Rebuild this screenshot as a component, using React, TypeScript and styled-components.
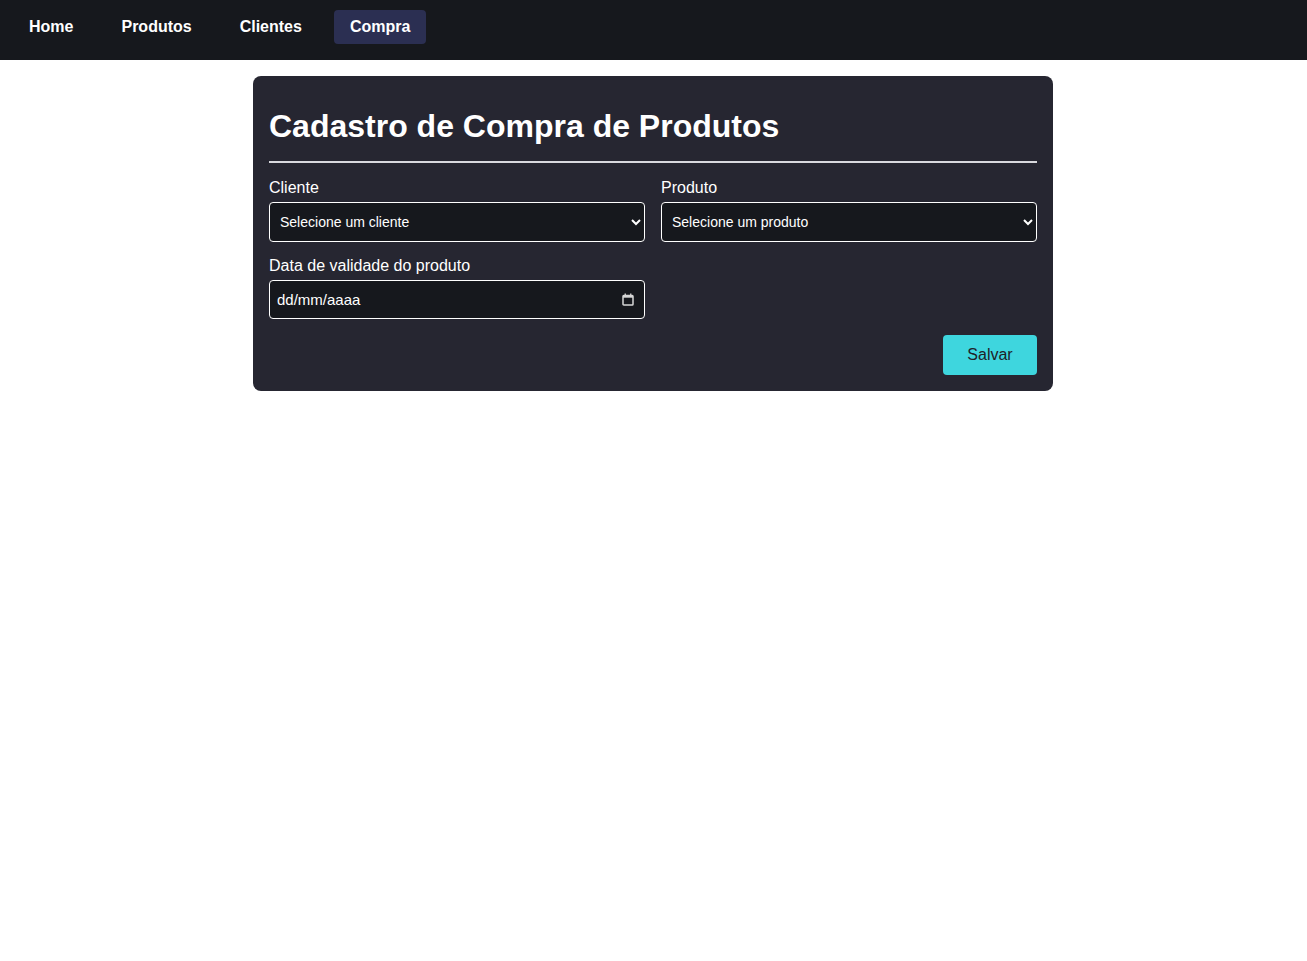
import React from "react";
import styled, { createGlobalStyle } from "styled-components";

const Global = createGlobalStyle`
  html, body { margin: 0; padding: 0; background: #ffffff; }
  body { font-family: "Liberation Sans", Arial, sans-serif; }
  * { box-sizing: border-box; }
`;

const NavBar = styled.nav`
  height: 60px;
  background: #16181d;
  display: flex;
  align-items: flex-start;
  gap: 16px;
  padding: 10px 13px 0;
`;

const NavLink = styled.a<{ $active?: boolean }>`
  display: block;
  padding: 0 16px;
  height: 34px;
  line-height: 34px;
  border-radius: 4px;
  font-size: 16px;
  font-weight: 700;
  color: #ffffff;
  text-decoration: none;
  background: ${(p) => (p.$active ? "#2b2f52" : "transparent")};
`;

const Main = styled.main`
  display: flex;
  justify-content: center;
  padding: 16px 1px 0 0;
`;

const Card = styled.section`
  width: 800px;
  background: #262631;
  border-radius: 8px;
  padding: 16px;
  color: #ffffff;
`;

const Title = styled.h1`
  margin: 16px 0 0;
  font-size: 32px;
  line-height: 37px;
  font-weight: 700;
`;

const Divider = styled.hr`
  margin: 16px 0 16px;
  border: none;
  border-top: 2px solid #d9d9de;
`;

const Grid = styled.div`
  display: grid;
  grid-template-columns: 1fr 1fr;
  column-gap: 16px;
  row-gap: 15px;
`;

const Field = styled.label`
  display: flex;
  flex-direction: column;
  gap: 5px;
  font-size: 16px;
  line-height: 18px;
`;

const Select = styled.select`
  height: 40px;
  background: #16181d;
  color: #ffffff;
  border: 1px solid #ffffff;
  border-radius: 4px;
  padding: 0 6px 0 6px;
  font-family: "Liberation Sans", Arial, sans-serif;
  font-size: 14px;
  color-scheme: dark;
`;

const DateBox = styled.div`
  height: 39px;
  display: flex;
  align-items: center;
  background: #16181d;
  border: 1px solid #ffffff;
  border-radius: 4px;
  padding: 0 10px 0 7px;
`;

const DateInput = styled.input`
  flex: 1;
  min-width: 0;
  background: transparent;
  border: none;
  outline: none;
  color: #ffffff;
  font-family: "Liberation Sans", Arial, sans-serif;
  font-size: 15px;
  padding: 0;
  &::placeholder { color: #ffffff; opacity: 1; }
`;

const Actions = styled.div`
  display: flex;
  justify-content: flex-end;
  margin-top: 16px;
`;

const SaveButton = styled.button`
  width: 94px;
  height: 40px;
  background: #3ed6de;
  color: #1f2128;
  border: none;
  border-radius: 4px;
  font-family: "Liberation Sans", Arial, sans-serif;
  font-size: 16px;
`;

const CalendarIcon = () => (
  <svg width="12" height="13" viewBox="0 0 12 13" fill="none">
    <rect x="1" y="2.5" width="10" height="9.5" rx="0.8" stroke="#d6d6d6" strokeWidth="1.5" />
    <rect x="1" y="2.5" width="10" height="2.2" fill="#d6d6d6" />
    <rect x="2.6" y="0.5" width="1.3" height="2" fill="#d6d6d6" />
    <rect x="8.1" y="0.5" width="1.3" height="2" fill="#d6d6d6" />
  </svg>
);

export default function App() {
  return (
    <>
      <Global />
      <NavBar>
        <NavLink>Home</NavLink>
        <NavLink>Produtos</NavLink>
        <NavLink>Clientes</NavLink>
        <NavLink $active>Compra</NavLink>
      </NavBar>
      <Main>
        <Card>
          <Title>Cadastro de Compra de Produtos</Title>
          <Divider />
          <Grid>
            <Field>
              Cliente
              <Select defaultValue="">
                <option value="">Selecione um cliente</option>
              </Select>
            </Field>
            <Field>
              Produto
              <Select defaultValue="">
                <option value="">Selecione um produto</option>
              </Select>
            </Field>
            <Field>
              Data de validade do produto
              <DateBox>
                <DateInput type="text" placeholder="dd/mm/aaaa" />
                <CalendarIcon />
              </DateBox>
            </Field>
          </Grid>
          <Actions>
            <SaveButton>Salvar</SaveButton>
          </Actions>
        </Card>
      </Main>
    </>
  );
}
